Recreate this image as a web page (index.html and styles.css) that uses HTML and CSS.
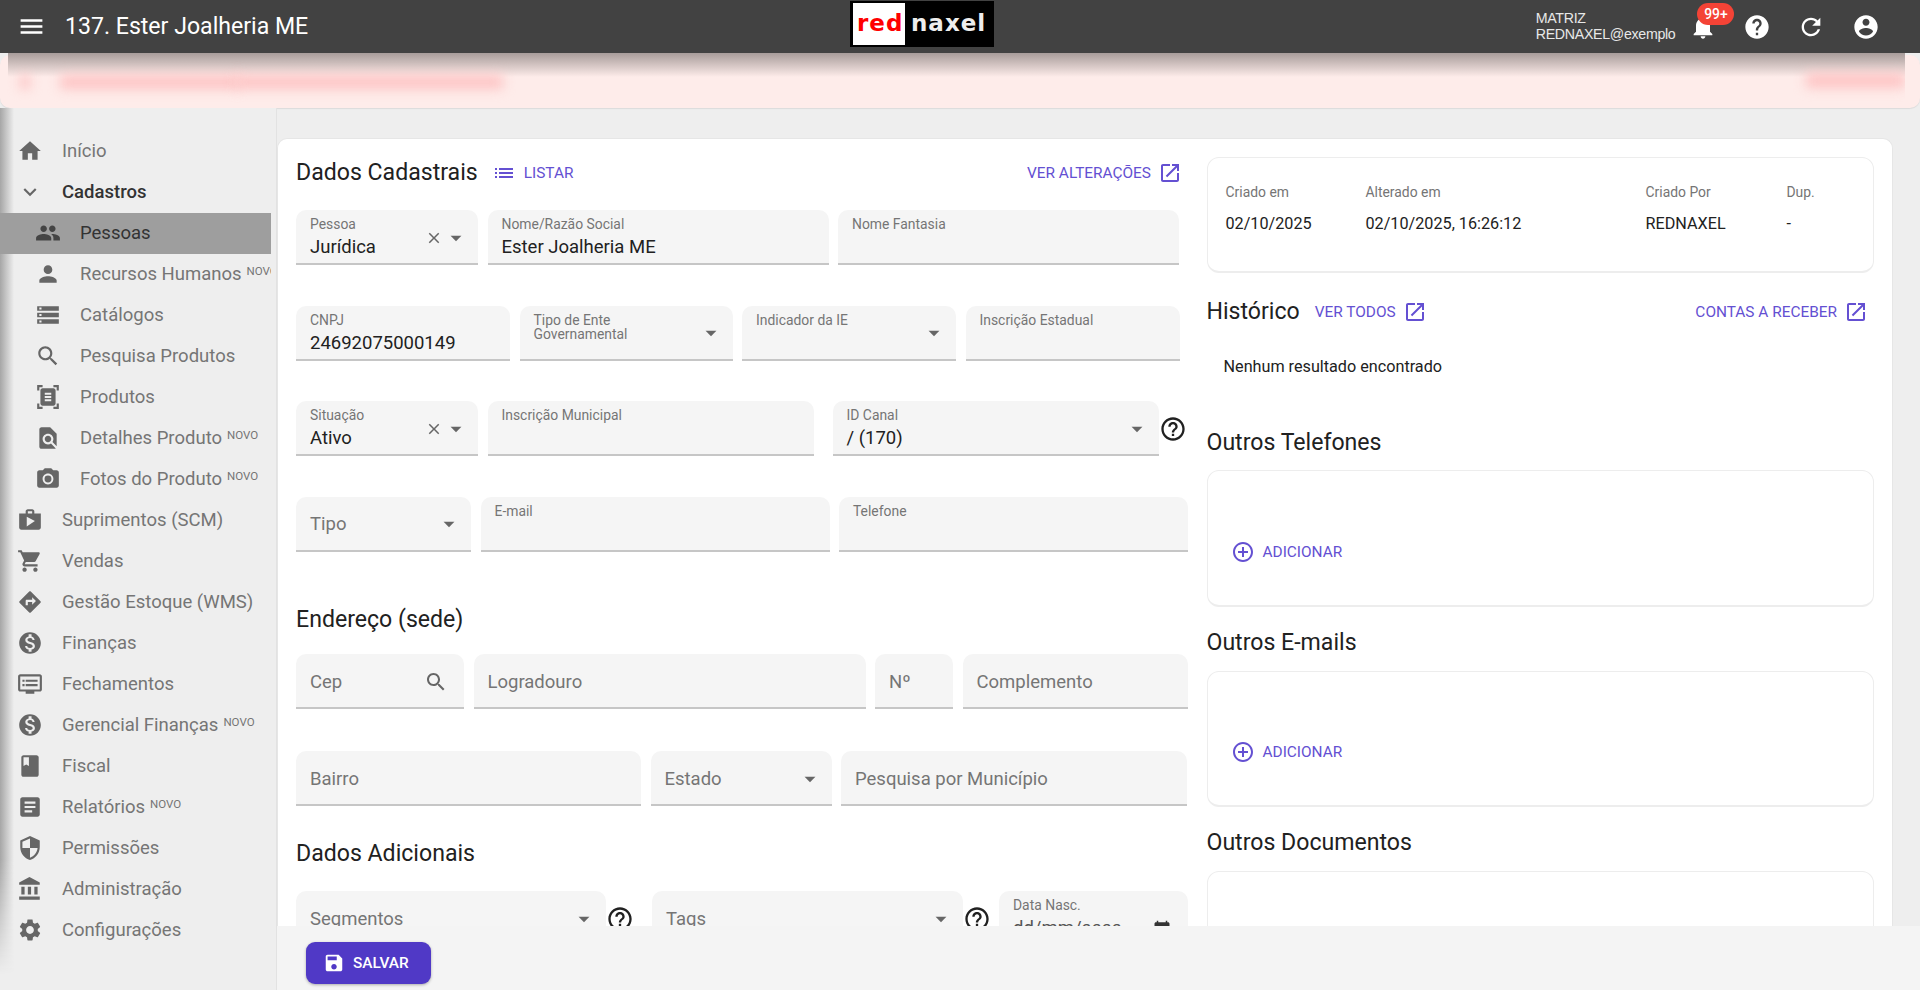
FILE: index.html
```html
<!DOCTYPE html>
<html lang="pt-BR">
  <head>
    <meta charset="UTF-8" />
    <meta name="viewport" content="width=device-width, initial-scale=1.0" />
    <title>137. Ester Joalheria ME</title>
    <link rel="stylesheet" href="styles.css">
  </head>
  <body>
    <svg class="sprite" xmlns="http://www.w3.org/2000/svg">
      <symbol id="i-menu" viewBox="0 0 24 24"><path d="M3 18h18v-2H3v2zm0-5h18v-2H3v2zm0-7v2h18V6H3z"/></symbol>
      <symbol id="i-home" viewBox="0 0 24 24"><path d="M10 20v-6h4v6h5v-8h3L12 3 2 12h3v8z"/></symbol>
      <symbol id="i-expand" viewBox="0 0 24 24"><path d="M16.59 8.59L12 13.17 7.41 8.59 6 10l6 6 6-6z"/></symbol>
      <symbol id="i-people" viewBox="0 0 24 24"><path d="M16 11c1.66 0 2.99-1.34 2.99-3S17.66 5 16 5c-1.66 0-3 1.34-3 3s1.34 3 3 3zm-8 0c1.66 0 2.99-1.34 2.99-3S9.66 5 8 5C6.34 5 5 6.34 5 8s1.34 3 3 3zm0 2c-2.33 0-7 1.17-7 3.5V19h14v-2.5c0-2.33-4.67-3.5-7-3.5zm8 0c-.29 0-.62.02-.97.05 1.16.84 1.97 1.97 1.97 3.45V19h6v-2.5c0-2.33-4.67-3.5-7-3.5z"/></symbol>
      <symbol id="i-person" viewBox="0 0 24 24"><path d="M12 12c2.21 0 4-1.79 4-4s-1.79-4-4-4-4 1.79-4 4 1.79 4 4 4zm0 2c-2.67 0-8 1.34-8 4v2h16v-2c0-2.66-5.33-4-8-4z"/></symbol>
      <symbol id="i-storage" viewBox="0 0 24 24"><path d="M2 20h20v-4H2v4zm2-3h2v2H4v-2zM2 4v4h20V4H2zm4 3H4V5h2v2zm-4 7h20v-4H2v4zm2-3h2v2H4v-2z"/></symbol>
      <symbol id="i-search" viewBox="0 0 24 24"><path d="M15.5 14h-.79l-.28-.27C15.41 12.59 16 11.11 16 9.5 16 5.91 13.09 3 9.5 3S3 5.91 3 9.5 5.91 16 9.5 16c1.61 0 3.09-.59 4.23-1.57l.27.28v.79l5 4.99L20.49 19l-4.99-5zm-6 0C7.01 14 5 11.99 5 9.5S7.01 5 9.5 5 14 7.01 14 9.5 11.99 14 9.5 14z"/></symbol>
      <symbol id="i-scanner" viewBox="0 0 24 24"><path fill-rule="evenodd" d="M7 3H4v3H2V1h5v2zm15 3V1h-5v2h3v3h2zM7 21H4v-3H2v5h5v-2zm13-3v3h-3v2h5v-5h-2zM7 4h10c1.1 0 2 .9 2 2v12c0 1.1-.9 2-2 2H7c-1.1 0-2-.9-2-2V6c0-1.1.9-2 2-2zm8 4H9v2h6V8zm0 3H9v2h6v-2zm0 3H9v2h6v-2z"/></symbol>
      <symbol id="i-find" viewBox="0 0 24 24"><path d="M20 19.59V8l-6-6H6c-1.1 0-1.99.9-1.99 2L4 20c0 1.1.89 2 1.99 2H18c.45 0 .85-.15 1.19-.4l-4.43-4.43c-.8.52-1.74.83-2.76.83-2.76 0-5-2.24-5-5s2.24-5 5-5 5 2.24 5 5c0 1.02-.31 1.96-.83 2.75L20 19.59zM9 13c0 1.66 1.34 3 3 3s3-1.34 3-3-1.34-3-3-3-3 1.34-3 3z"/></symbol>
      <symbol id="i-camera" viewBox="0 0 24 24"><circle cx="12" cy="12" r="3.2"/><path d="M9 2L7.17 4H4c-1.1 0-2 .9-2 2v12c0 1.1.9 2 2 2h16c1.1 0 2-.9 2-2V6c0-1.1-.9-2-2-2h-3.17L15 2H9zm3 15c-2.76 0-5-2.24-5-5s2.24-5 5-5 5 2.24 5 5-2.24 5-5 5z"/></symbol>
      <symbol id="i-shop" viewBox="0 0 24 24"><path d="M16 6V4c0-1.11-.89-2-2-2h-4c-1.11 0-2 .89-2 2v2H2v13c0 1.11.89 2 2 2h16c1.11 0 2-.89 2-2V6h-6zm-6-2h4v2h-4V4zM9 18V9l7.5 4L9 18z"/></symbol>
      <symbol id="i-cart" viewBox="0 0 24 24"><path d="M7 18c-1.1 0-1.99.9-1.99 2S5.9 22 7 22s2-.9 2-2-.9-2-2-2zM1 2v2h2l3.6 7.59-1.35 2.45c-.16.28-.25.61-.25.96 0 1.1.9 2 2 2h12v-2H7.42c-.14 0-.25-.11-.25-.25l.03-.12.9-1.63h7.45c.75 0 1.41-.41 1.75-1.03l3.58-6.49c.08-.14.12-.31.12-.48 0-.55-.45-1-1-1H5.21l-.94-2H1zm16 16c-1.1 0-1.99.9-1.99 2s.89 2 1.99 2 2-.9 2-2-.9-2-2-2z"/></symbol>
      <symbol id="i-directions" viewBox="0 0 24 24"><path d="M21.71 11.29l-9-9c-.39-.39-1.02-.39-1.41 0l-9 9c-.39.39-.39 1.02 0 1.41l9 9c.39.39 1.02.39 1.41 0l9-9c.39-.38.39-1.01 0-1.41zM14 14.5V12h-4v3H8v-4c0-.55.45-1 1-1h5V7.5l3.5 3.5-3.5 3.5z"/></symbol>
      <symbol id="i-money" viewBox="0 0 24 24"><path d="M12 2C6.48 2 2 6.48 2 12s4.48 10 10 10 10-4.48 10-10S17.52 2 12 2zm1.41 16.09V20h-2.67v-1.93c-1.71-.36-3.16-1.46-3.27-3.4h1.96c.1 1.05.82 1.87 2.65 1.87 1.96 0 2.4-.98 2.4-1.59 0-.83-.44-1.61-2.67-2.14-2.48-.6-4.18-1.62-4.18-3.67 0-1.72 1.39-2.84 3.11-3.21V4h2.67v1.95c1.86.45 2.79 1.86 2.85 3.39H14.3c-.05-1.11-.64-1.87-2.22-1.87-1.5 0-2.4.68-2.4 1.64 0 .84.65 1.39 2.67 1.91s4.18 1.39 4.18 3.91c-.01 1.83-1.38 2.83-3.12 3.16z"/></symbol>
      <symbol id="i-dvr" viewBox="0 0 24 24"><path d="M21 3H3c-1.1 0-2 .9-2 2v12c0 1.1.9 2 2 2h5v2h8v-2h5c1.1 0 1.99-.9 1.99-2L23 5c0-1.1-.9-2-2-2zm0 14H3V5h18v12zm-2-9H8v2h11V8zm0 4H8v2h11v-2zM7 8H5v2h2V8zm0 4H5v2h2v-2z"/></symbol>
      <symbol id="i-book" viewBox="0 0 24 24"><path d="M18 2H6c-1.1 0-2 .9-2 2v16c0 1.1.9 2 2 2h12c1.1 0 2-.9 2-2V4c0-1.1-.9-2-2-2zM6 4h5v8l-2.5-1.5L6 12V4z"/></symbol>
      <symbol id="i-article" viewBox="0 0 24 24"><path d="M19 3H5c-1.1 0-2 .9-2 2v14c0 1.1.9 2 2 2h14c1.1 0 2-.9 2-2V5c0-1.1-.9-2-2-2zm-5 14H7v-2h7v2zm3-4H7v-2h10v2zm0-4H7V7h10v2z"/></symbol>
      <symbol id="i-security" viewBox="0 0 24 24"><path d="M12 1L3 5v6c0 5.55 3.84 10.74 9 12 5.16-1.26 9-6.45 9-12V5l-9-4zm0 10.99h7c-.53 4.12-3.28 7.79-7 8.94V12H5V6.3l7-3.11v8.8z"/></symbol>
      <symbol id="i-bank" viewBox="0 0 24 24"><path d="M4 10v7h3v-7H4zm6 0v7h3v-7h-3zM2 22h19v-3H2v3zm14-12v7h3v-7h-3zm-4.5-9L2 6v2h19V6l-9.5-5z"/></symbol>
      <symbol id="i-settings" viewBox="0 0 24 24"><path d="M19.14 12.94c.04-.3.06-.61.06-.94 0-.32-.02-.64-.07-.94l2.03-1.58c.18-.14.23-.41.12-.61l-1.92-3.32c-.12-.22-.37-.29-.59-.22l-2.39.96c-.5-.38-1.03-.7-1.62-.94l-.36-2.54c-.04-.24-.24-.41-.48-.41h-3.84c-.24 0-.43.17-.47.41l-.36 2.54c-.59.24-1.13.57-1.62.94l-2.39-.96c-.22-.08-.47 0-.59.22L2.74 8.87c-.12.21-.08.47.12.61l2.03 1.58c-.05.3-.09.63-.09.94s.02.64.07.94l-2.03 1.58c-.18.14-.23.41-.12.61l1.92 3.32c.12.22.37.29.59.22l2.39-.96c.5.38 1.03.7 1.62.94l.36 2.54c.05.24.24.41.48.41h3.84c.24 0 .44-.17.47-.41l.36-2.54c.59-.24 1.13-.56 1.62-.94l2.39.96c.22.08.47 0 .59-.22l1.92-3.32c.12-.22.07-.47-.12-.61l-2.01-1.58zM12 15.6c-1.98 0-3.6-1.62-3.6-3.6s1.62-3.6 3.6-3.6 3.6 1.62 3.6 3.6-1.62 3.6-3.6 3.6z"/></symbol>
      <symbol id="i-bell" viewBox="0 0 24 24"><path d="M12 22c1.1 0 2-.9 2-2h-4c0 1.1.89 2 2 2zm6-6v-5c0-3.07-1.64-5.64-4.5-6.32V4c0-.83-.67-1.5-1.5-1.5s-1.5.67-1.5 1.5v.68C7.63 5.36 6 7.92 6 11v5l-2 2v1h16v-1l-2-2z"/></symbol>
      <symbol id="i-help" viewBox="0 0 24 24"><path d="M12 2C6.48 2 2 6.48 2 12s4.48 10 10 10 10-4.48 10-10S17.52 2 12 2zm1 17h-2v-2h2v2zm2.07-7.75l-.9.92C13.45 12.9 13 13.5 13 15h-2v-.5c0-1.1.45-2.1 1.17-2.83l1.24-1.26c.37-.36.59-.86.59-1.41 0-1.1-.9-2-2-2s-2 .9-2 2H8c0-2.21 1.79-4 4-4s4 1.79 4 4c0 .88-.36 1.68-.93 2.25z"/></symbol>
      <symbol id="i-help-o" viewBox="0 0 24 24"><path d="M11 18h2v-2h-2v2zm1-16C6.48 2 2 6.48 2 12s4.48 10 10 10 10-4.48 10-10S17.52 2 12 2zm0 18c-4.41 0-8-3.59-8-8s3.59-8 8-8 8 3.59 8 8-3.59 8-8 8zm0-14c-2.21 0-4 1.79-4 4h2c0-1.1.9-2 2-2s2 .9 2 2c0 2-3 1.75-3 5h2c0-2.25 3-2.5 3-5 0-2.21-1.79-4-4-4z"/></symbol>
      <symbol id="i-refresh" viewBox="0 0 24 24"><path d="M17.65 6.35C16.2 4.9 14.21 4 12 4c-4.42 0-7.99 3.58-7.99 8s3.57 8 7.99 8c3.73 0 6.84-2.55 7.73-6h-2.08c-.82 2.33-3.04 4-5.65 4-3.31 0-6-2.69-6-6s2.69-6 6-6c1.66 0 3.14.69 4.22 1.78L13 11h7V4l-2.35 2.35z"/></symbol>
      <symbol id="i-account" viewBox="0 0 24 24"><path d="M12 2C6.48 2 2 6.48 2 12s4.48 10 10 10 10-4.48 10-10S17.52 2 12 2zm0 3c1.66 0 3 1.34 3 3s-1.34 3-3 3-3-1.34-3-3 1.34-3 3-3zm0 14.2c-2.5 0-4.71-1.28-6-3.22.03-1.99 4-3.08 6-3.08 1.99 0 5.97 1.09 6 3.08-1.29 1.94-3.5 3.22-6 3.22z"/></symbol>
      <symbol id="i-list" viewBox="0 0 24 24"><path d="M3 13h2v-2H3v2zm0 4h2v-2H3v2zm0-8h2V7H3v2zm4 4h14v-2H7v2zm0 4h14v-2H7v2zM7 7v2h14V7H7z"/></symbol>
      <symbol id="i-open" viewBox="0 0 24 24"><path d="M19 19H5V5h7V3H5c-1.11 0-2 .9-2 2v14c0 1.1.89 2 2 2h14c1.1 0 2-.9 2-2v-7h-2v7zM14 3v2h3.59l-9.83 9.83 1.41 1.41L19 6.41V10h2V3h-7z"/></symbol>
      <symbol id="i-close" viewBox="0 0 24 24"><path d="M19 6.41L17.59 5 12 10.59 6.41 5 5 6.41 10.59 12 5 17.59 6.41 19 12 13.41 17.59 19 19 17.59 13.41 12z"/></symbol>
      <symbol id="i-drop" viewBox="0 0 24 24"><path d="M7 10l5 5 5-5z"/></symbol>
      <symbol id="i-add" viewBox="0 0 24 24"><path d="M13 7h-2v4H7v2h4v4h2v-4h4v-2h-4V7zm-1-5C6.49 2 2 6.49 2 12s4.49 10 10 10 10-4.49 10-10S17.51 2 12 2zm0 18c-4.41 0-8-3.59-8-8s3.59-8 8-8 8 3.59 8 8-3.59 8-8 8z"/></symbol>
      <symbol id="i-save" viewBox="0 0 24 24"><path d="M17 3H5c-1.11 0-2 .9-2 2v14c0 1.1.89 2 2 2h14c1.1 0 2-.9 2-2V7l-4-4zm-5 16c-1.66 0-3-1.34-3-3s1.34-3 3-3 3 1.34 3 3-1.34 3-3 3zm3-10H5V5h10v4z"/></symbol>
      <symbol id="i-event" viewBox="0 0 24 24"><path d="M20 3h-1V1h-2v2H7V1H5v2H4c-1.1 0-2 .9-2 2v16c0 1.1.9 2 2 2h16c1.1 0 2-.9 2-2V5c0-1.1-.9-2-2-2zm0 18H4V8h16v13z"/></symbol>
    </svg>

    <header class="topbar">
      <div class="topbar-left">
        <svg class="ico menu-ico"><use href="#i-menu"/></svg>
        <span class="company">137. Ester Joalheria ME</span>
      </div>
      <div class="logo"><span class="logo-red">red</span><span class="logo-white">naxel</span></div>
      <div class="topbar-right">
        <div class="user-info"><div>MATRIZ</div><div>REDNAXEL@exemplo</div></div>
        <div class="top-btn">
          <svg class="ico"><use href="#i-bell"/></svg>
          <span class="badge">99+</span>
        </div>
        <div class="top-btn"><svg class="ico"><use href="#i-help"/></svg></div>
        <div class="top-btn"><svg class="ico"><use href="#i-refresh"/></svg></div>
        <div class="top-btn"><svg class="ico"><use href="#i-account"/></svg></div>
      </div>
    </header>

    <div class="alert">
      <div class="alert-fade"></div>
      <div class="blur blur-icon"></div>
      <div class="blur blur-text"></div>
      <div class="blur blur-text blur-text-b"></div>
      <div class="blur blur-action"></div>
    </div>

    <div class="main">
      <nav class="sidebar">
        <a class="nav-item"><svg class="ico"><use href="#i-home"/></svg>Início</a>
        <a class="nav-item nav-open"><svg class="ico"><use href="#i-expand"/></svg>Cadastros</a>
        <a class="nav-item sub selected"><svg class="ico"><use href="#i-people"/></svg>Pessoas</a>
        <a class="nav-item sub"><svg class="ico"><use href="#i-person"/></svg>Recursos Humanos<sup>NOVO</sup></a>
        <a class="nav-item sub"><svg class="ico"><use href="#i-storage"/></svg>Catálogos</a>
        <a class="nav-item sub"><svg class="ico"><use href="#i-search"/></svg>Pesquisa Produtos</a>
        <a class="nav-item sub"><svg class="ico"><use href="#i-scanner"/></svg>Produtos</a>
        <a class="nav-item sub"><svg class="ico"><use href="#i-find"/></svg>Detalhes Produto<sup>NOVO</sup></a>
        <a class="nav-item sub"><svg class="ico"><use href="#i-camera"/></svg>Fotos do Produto<sup>NOVO</sup></a>
        <a class="nav-item"><svg class="ico"><use href="#i-shop"/></svg>Suprimentos (SCM)</a>
        <a class="nav-item"><svg class="ico"><use href="#i-cart"/></svg>Vendas</a>
        <a class="nav-item"><svg class="ico"><use href="#i-directions"/></svg>Gestão Estoque (WMS)</a>
        <a class="nav-item"><svg class="ico"><use href="#i-money"/></svg>Finanças</a>
        <a class="nav-item"><svg class="ico"><use href="#i-dvr"/></svg>Fechamentos</a>
        <a class="nav-item"><svg class="ico"><use href="#i-money"/></svg>Gerencial Finanças<sup>NOVO</sup></a>
        <a class="nav-item"><svg class="ico"><use href="#i-book"/></svg>Fiscal</a>
        <a class="nav-item"><svg class="ico"><use href="#i-article"/></svg>Relatórios<sup>NOVO</sup></a>
        <a class="nav-item"><svg class="ico"><use href="#i-security"/></svg>Permissões</a>
        <a class="nav-item"><svg class="ico"><use href="#i-bank"/></svg>Administração</a>
        <a class="nav-item"><svg class="ico"><use href="#i-settings"/></svg>Configurações</a>
      </nav>

      <main class="card">
        <section class="col-left">
          <div class="title-row">
            <h2>Dados Cadastrais</h2>
            <a class="link link-list"><svg class="ico"><use href="#i-list"/></svg>LISTAR</a>
            <a class="link link-end">VER ALTERAÇÕES<svg class="ico"><use href="#i-open"/></svg></a>
          </div>

          <div class="form-row r1">
            <div class="field">
              <div class="field-body"><label>Pessoa</label><div class="value">Jurídica</div></div>
              <svg class="ico clear"><use href="#i-close"/></svg><svg class="ico drop"><use href="#i-drop"/></svg>
            </div>
            <div class="field"><div class="field-body"><label>Nome/Razão Social</label><div class="value">Ester Joalheria ME</div></div></div>
            <div class="field"><div class="field-body"><label>Nome Fantasia</label></div></div>
          </div>

          <div class="form-row r2">
            <div class="field"><div class="field-body"><label>CNPJ</label><div class="value">24692075000149</div></div></div>
            <div class="field">
              <div class="field-body"><label>Tipo de Ente Governamental</label></div>
              <svg class="ico drop"><use href="#i-drop"/></svg>
            </div>
            <div class="field">
              <div class="field-body"><label>Indicador da IE</label></div>
              <svg class="ico drop"><use href="#i-drop"/></svg>
            </div>
            <div class="field"><div class="field-body"><label>Inscrição Estadual</label></div></div>
          </div>

          <div class="form-row r3">
            <div class="field">
              <div class="field-body"><label>Situação</label><div class="value">Ativo</div></div>
              <svg class="ico clear"><use href="#i-close"/></svg><svg class="ico drop"><use href="#i-drop"/></svg>
            </div>
            <div class="field"><div class="field-body"><label>Inscrição Municipal</label></div></div>
            <div class="with-help">
              <div class="field">
                <div class="field-body"><label>ID Canal</label><div class="value">/ (170)</div></div>
                <svg class="ico drop"><use href="#i-drop"/></svg>
              </div>
              <svg class="ico help"><use href="#i-help-o"/></svg>
            </div>
          </div>

          <div class="form-row r4">
            <div class="field">
              <span class="placeholder">Tipo</span>
              <svg class="ico drop"><use href="#i-drop"/></svg>
            </div>
            <div class="field"><div class="field-body"><label>E-mail</label></div></div>
            <div class="field"><div class="field-body"><label>Telefone</label></div></div>
          </div>

          <h2 class="title-endereco">Endereço (sede)</h2>

          <div class="form-row r5">
            <div class="field">
              <span class="placeholder">Cep</span>
              <svg class="ico field-search"><use href="#i-search"/></svg>
            </div>
            <div class="field"><span class="placeholder">Logradouro</span></div>
            <div class="field"><span class="placeholder">Nº</span></div>
            <div class="field"><span class="placeholder">Complemento</span></div>
          </div>

          <div class="form-row r6">
            <div class="field"><span class="placeholder">Bairro</span></div>
            <div class="field">
              <span class="placeholder">Estado</span>
              <svg class="ico drop"><use href="#i-drop"/></svg>
            </div>
            <div class="field"><span class="placeholder">Pesquisa por Município</span></div>
          </div>

          <h2 class="title-adicionais">Dados Adicionais</h2>

          <div class="form-row r7">
            <div class="with-help">
              <div class="field">
                <span class="placeholder">Segmentos</span>
                <svg class="ico drop"><use href="#i-drop"/></svg>
              </div>
              <svg class="ico help"><use href="#i-help-o"/></svg>
            </div>
            <div class="with-help">
              <div class="field">
                <span class="placeholder">Tags</span>
                <svg class="ico drop"><use href="#i-drop"/></svg>
              </div>
              <svg class="ico help"><use href="#i-help-o"/></svg>
            </div>
            <div class="field">
              <div class="field-body"><label>Data Nasc.</label><div class="value value-date">dd/mm/aaaa</div></div>
              <svg class="ico cal"><use href="#i-event"/></svg>
            </div>
          </div>
        </section>

        <section class="col-right">
          <div class="box info-box">
            <div class="info-label">Criado em</div>
            <div class="info-label">Alterado em</div>
            <div class="info-label">Criado Por</div>
            <div class="info-label">Dup.</div>
            <div class="info-value">02/10/2025</div>
            <div class="info-value">02/10/2025, 16:26:12</div>
            <div class="info-value">REDNAXEL</div>
            <div class="info-value">-</div>
          </div>

          <div class="title-row title-historico">
            <h2>Histórico</h2>
            <a class="link link-todos">VER TODOS<svg class="ico"><use href="#i-open"/></svg></a>
            <a class="link link-end">CONTAS A RECEBER<svg class="ico"><use href="#i-open"/></svg></a>
          </div>
          <p class="empty">Nenhum resultado encontrado</p>

          <h2 class="title-tel">Outros Telefones</h2>
          <div class="box add-box">
            <a class="link"><svg class="ico"><use href="#i-add"/></svg>ADICIONAR</a>
          </div>

          <h2 class="title-mail">Outros E-mails</h2>
          <div class="box add-box">
            <a class="link"><svg class="ico"><use href="#i-add"/></svg>ADICIONAR</a>
          </div>

          <h2 class="title-doc">Outros Documentos</h2>
          <div class="box add-box"></div>
        </section>
      </main>
    </div>

    <div class="savebar">
      <button class="save-btn"><svg class="ico"><use href="#i-save"/></svg>SALVAR</button>
    </div>
  </body>
</html>
```

FILE: styles.css
```css
* {
  box-sizing: border-box;
}

html,
body {
  height: 100%;
}

body {
  margin: 0;
  font-family: Roboto, "Liberation Sans", sans-serif;
  background-color: #eeeeee;
  color: #212121;
  overflow: hidden;
  display: flex;
  flex-direction: column;
}

/* thin light line along the bottom of the window */
body::after {
  content: "";
  position: fixed;
  left: 0;
  right: 0;
  bottom: 0;
  height: 2px;
  background-color: white;
}

.sprite {
  display: none;
}

.ico {
  width: 26px;
  height: 26px;
  fill: currentColor;
  flex: none;
}

h2 {
  margin: 0;
  font-size: 23.1px;
  font-weight: 400;
  line-height: 40px;
}

/* top bar */
.topbar {
  height: 53px;
  flex: none;
  display: flex;
  background-color: #424242;
  color: white;
}

.topbar-left {
  flex: 0 0 850px;
  display: flex;
  align-items: center;
  padding-left: 17px;
}

.menu-ico {
  width: 29px;
  height: 29px;
}

.company {
  margin-left: 19px;
  font-size: 23.1px;
}

.logo {
  width: 144px;
  height: 46px;
  margin-top: 1px;
  padding: 2px 3px;
  background-color: black;
  display: flex;
  font-family: "DejaVu Sans", sans-serif;
  font-weight: bold;
  font-size: 23px;
  letter-spacing: 1px;
  line-height: 41px;
}

.logo-red {
  width: 52px;
  background-color: white;
  color: #f00;
  padding-left: 4px;
}

.logo-white {
  padding-left: 6px;
  color: #eeeeee;
}

.topbar-right {
  flex: 1;
  display: flex;
  justify-content: flex-end;
  align-items: center;
  padding-right: 27px;
}

.user-info {
  font-family: "Liberation Sans", sans-serif;
  font-size: 14.2px;
  line-height: 15.5px;
  letter-spacing: -0.3px;
  color: #e8e8e8;
}

.top-btn {
  position: relative;
  width: 54.4px;
  height: 53px;
  display: flex;
  align-items: center;
  justify-content: center;
}

.top-btn .ico {
  width: 28px;
  height: 28px;
}

.badge {
  position: absolute;
  top: 3px;
  left: 22px;
  width: 37px;
  height: 22px;
  border-radius: 11px;
  background-color: #f44336;
  font-size: 13.9px;
  font-weight: 500;
  line-height: 22px;
  text-align: center;
}

/* blurred notice */
.alert {
  position: relative;
  flex: none;
  height: 53px;
  margin-top: 2px;
  background-color: #feecea;
  border-radius: 10px;
  box-shadow: 0 1px 1px rgba(0, 0, 0, 0.08);
}

.alert-fade {
  position: absolute;
  left: 8px;
  right: 15px;
  top: -2px;
  height: 24px;
  background: linear-gradient(#a89c9a, rgba(200, 185, 183, 0));
}

.blur {
  position: absolute;
  background-color: #fdc4c4;
  filter: blur(6px);
}

.blur-icon {
  left: 20px;
  top: 20px;
  width: 10px;
  height: 14px;
}

.blur-text {
  left: 60px;
  top: 20px;
  width: 180px;
  height: 14px;
}

.blur-text-b {
  left: 235px;
  width: 268px;
}

.blur-action {
  left: 1806px;
  top: 18px;
  width: 99px;
  height: 15px;
  clip-path: inset(-20px 0 -20px -20px);
}

/* side menu + card */
.main {
  flex: 1;
  min-height: 0;
  display: flex;
}

.sidebar {
  position: relative;
  flex: 0 0 277px;
  min-width: 0;
  padding-top: 22.5px;
  padding-right: 5px;
  border-right: 1px solid #e2e2e2;
  background-color: #eeeeee;
}

.sidebar::before {
  content: "";
  position: absolute;
  left: 0;
  top: 0;
  bottom: 0;
  width: 14px;
  background: linear-gradient(90deg, #a6a6a6, #eeeeee);
  -webkit-mask-image: linear-gradient(#000 85%, transparent 98%);
  mask-image: linear-gradient(#000 85%, transparent 98%);
}

.nav-item {
  position: relative;
  height: 41px;
  display: flex;
  align-items: center;
  padding-left: 17px;
  font-size: 18.5px;
  color: #757575;
  white-space: nowrap;
  overflow: hidden;
}

.nav-item .ico {
  margin-right: 19px;
  color: #666666;
}

.nav-item.sub {
  padding-left: 35px;
}

.nav-item sup {
  margin-left: 5px;
  font-size: 11.5px;
  line-height: 1;
  align-self: flex-start;
  margin-top: 12px;
}

.nav-open {
  color: #333333;
  font-weight: 500;
}

.selected {
  background-color: #9e9e9e;
  color: #333333;
}

.selected .ico {
  color: #444444;
}

.card {
  flex: 0 0 1616px;
  height: 100%;
  margin-top: 30px;
  padding: 14px 20px 0 18px;
  background-color: white;
  border: 1px solid #e6e6e6;
  border-bottom: none;
  border-radius: 10px 10px 0 0;
  display: flex;
  overflow: hidden;
}

.col-left {
  flex: 0 0 892px;
}

.col-right {
  flex: 0 0 667px;
  margin-left: 18.5px;
  margin-top: 4px;
}

.title-row {
  height: 40px;
  display: flex;
  align-items: center;
}

.link {
  display: inline-flex;
  align-items: center;
  color: #6450d2;
  font-size: 15.4px;
  font-weight: 400;
  white-space: nowrap;
}

.link .ico {
  width: 24px;
  height: 24px;
}

.link-list {
  margin-left: 14px;
}

.link-list .ico {
  margin-right: 8px;
}

.link-end {
  margin-left: auto;
  margin-right: 6px;
}

.link-end .ico {
  margin-left: 7px;
}

/* form */
.form-row {
  display: grid;
  column-gap: 9.5px;
  margin-top: 14px;
  margin-bottom: 40.5px;
}

.title-row + .form-row {
  margin-top: 17px;
}

.form-row + .form-row {
  margin-top: 0;
}

.r1 {
  grid-template-columns: 182px 341px 341px;
}

.r2 {
  grid-template-columns: 214px 213px 214px 214px;
}

.r3 {
  grid-template-columns: 182px 326px 365px;
}

.r4 {
  grid-template-columns: 175px 349px 349px;
}

.r5 {
  grid-template-columns: 168px 392px 78px 225px;
  margin-bottom: 42px;
}

.r6 {
  grid-template-columns: 345px 181px 346px;
  margin-bottom: 28px;
}

.r7 {
  grid-template-columns: 337px 347px 189px;
}

.field {
  height: 55px;
  padding: 2px 10px 0 14px;
  display: flex;
  align-items: center;
  background-color: #f5f5f5;
  border-bottom: 2px solid #c6c6c6;
  border-radius: 10px 10px 0 0;
  overflow: hidden;
}

.field-body {
  flex: 1;
  min-width: 0;
  align-self: flex-start;
  margin-top: 5px;
}

.field label {
  display: block;
  font-size: 13.9px;
  line-height: 14px;
  color: #757575;
}

.value {
  margin-top: 5px;
  font-size: 18.5px;
  line-height: 22px;
  color: #212121;
}

.value-date {
  color: #555555;
}

.placeholder {
  flex: 1;
  font-size: 18.5px;
  color: #757575;
}

.clear {
  width: 18px;
  height: 18px;
  color: #666666;
}

.drop {
  width: 26px;
  height: 26px;
  color: #666666;
  margin-right: -1px;
}

.field-search {
  width: 24px;
  height: 24px;
  color: #666666;
  margin-right: 6px;
}

.cal {
  width: 18px;
  height: 18px;
  color: #333333;
  align-self: flex-start;
  margin: 27px 7px 0 0;
}

.with-help {
  display: flex;
  align-items: center;
}

.with-help .field {
  flex: 1;
  min-width: 0;
}

.with-help + .with-help .field,
.r3 .with-help .field {
  margin-left: 9.5px;
}

.help {
  width: 28px;
  height: 28px;
  margin-right: -1px;
  color: #212121;
}

.r3 .help {
  margin-right: 1px;
}

.title-endereco {
  margin-top: 48.5px;
  margin-bottom: 14px;
}

.title-adicionais {
  margin-bottom: 17px;
}

/* right column */
.box {
  border: 1px solid #ededed;
  border-bottom-width: 2px;
  border-radius: 12px;
}

.info-box {
  height: 116px;
  padding: 25px 18px 0;
  display: grid;
  grid-template-columns: 140px 280px 141px auto;
  grid-template-rows: 18px 44px;
  align-items: center;
}

.info-label {
  font-size: 13.9px;
  color: #757575;
}

.info-value {
  font-size: 16.2px;
  color: #212121;
}

.title-historico {
  margin-top: 19px;
}

.title-historico h2 {
  margin-right: 15px;
}

.link-todos .ico {
  margin-left: 7px;
}

.col-right .link-end {
  margin-right: 5.5px;
}

.empty {
  margin: 24px 0 0 17px;
  font-size: 16.2px;
  line-height: 22px;
}

.title-tel {
  margin-top: 45px;
  margin-bottom: 7px;
}

.title-mail {
  margin-top: 16px;
  margin-bottom: 8px;
}

.title-doc {
  margin-top: 15.5px;
  margin-bottom: 8px;
}

.add-box {
  height: 136.5px;
  padding: 68.5px 0 0 23px;
}

.add-box .link .ico {
  margin-right: 8px;
}

/* sticky footer */
.savebar {
  position: fixed;
  left: 277px;
  right: 0;
  top: 926px;
  height: 64px;
  background-color: #f4f4f4;
}

.save-btn {
  margin: 16px 0 0 29px;
  width: 125px;
  height: 42px;
  display: flex;
  align-items: center;
  padding-left: 17px;
  background-color: #5039c6;
  color: white;
  border: none;
  border-radius: 9px;
  box-shadow: 0 1px 3px rgba(0, 0, 0, 0.3);
  font-family: inherit;
  font-size: 15.4px;
  font-weight: 500;
}

.save-btn .ico {
  width: 22px;
  height: 22px;
  margin-right: 8px;
}
```
